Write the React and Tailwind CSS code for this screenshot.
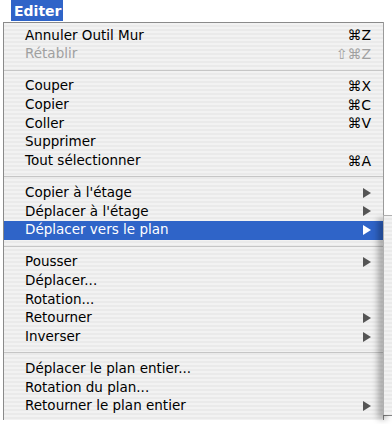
const groups = [
  [
    { label: "Annuler Outil Mur", key: "⌘Z" },
    { label: "Rétablir", key: "⇧⌘Z", disabled: true },
  ],
  [
    { label: "Couper", key: "⌘X" },
    { label: "Copier", key: "⌘C" },
    { label: "Coller", key: "⌘V" },
    { label: "Supprimer" },
    { label: "Tout sélectionner", key: "⌘A" },
  ],
  [
    { label: "Copier à l'étage", sub: true },
    { label: "Déplacer à l'étage", sub: true },
    { label: "Déplacer vers le plan", sub: true, active: true },
  ],
  [
    { label: "Pousser", sub: true },
    { label: "Déplacer..." },
    { label: "Rotation..." },
    { label: "Retourner", sub: true },
    { label: "Inverser", sub: true },
  ],
  [
    { label: "Déplacer le plan entier..." },
    { label: "Rotation du plan..." },
    { label: "Retourner le plan entier", sub: true },
  ],
];

function Arrow({ active }) {
  return (
    <svg width="8" height="10" viewBox="0 0 8 10" className="shrink-0">
      <path d="M0 0 L8 5 L0 10 Z" fill={active ? "#ffffff" : "#555555"} />
    </svg>
  );
}

function Item({ item }) {
  const color = item.active
    ? "text-white"
    : item.disabled
    ? "text-[#a0a0a0]"
    : "text-black";
  return (
    <div
      className={`flex h-[18.75px] items-center justify-between pl-[21px] pr-[12px] ${
        item.active ? "bg-[#2f64c8]" : ""
      } ${color}`}
    >
      <span>{item.label}</span>
      {item.key && (
        <span className={`text-[14px] ${item.disabled ? "text-[#a0a0a0]" : "text-black"}`}>
          {item.key}
        </span>
      )}
      {item.sub && <Arrow active={item.active} />}
    </div>
  );
}

export default function App() {
  return (
    <div className="w-[392px] h-[424px] overflow-hidden bg-white text-[13.5px] leading-none font-['DejaVu_Sans',sans-serif]">
      {/* Menu bar title */}
      <div className="h-[22px] pl-[11px]">
        <div className="inline-flex h-[21px] w-[52px] items-center bg-[#2f64c8] pl-[3px] text-[14px] font-semibold text-white">
          Editer
        </div>
      </div>

      <div className="flex">
        {/* Main menu */}
        <div className="ml-[3px] w-[380px] border-l border-t border-[#8a8a8a] bg-[repeating-linear-gradient(to_bottom,#f2f2f2_0px,#f2f2f2_2px,#eaeaea_2px,#eaeaea_4px)] pt-[3px] pb-[4px]">
          {groups.map((g, gi) => (
            <div key={gi}>
              {gi > 0 && (
                <div className="flex h-[13px] items-center">
                  <div className="h-px w-full bg-[#c6c6c6]" />
                </div>
              )}
              {g.map((item, i) => (
                <Item key={i} item={item} />
              ))}
            </div>
          ))}
        </div>

        {/* Edge of the open submenu */}
        <div className="flex flex-1 flex-col">
          <div className="h-[193px] border-l border-[#9a9a9a]" />
          <div className="relative z-10 h-[200px] border-l border-t border-[#b0b0b0] bg-[repeating-linear-gradient(to_bottom,#f2f2f2_0px,#f2f2f2_2px,#eaeaea_2px,#eaeaea_4px)] shadow-[-5px_4px_6px_rgba(0,0,0,0.3)]" />
          <div className="flex-1 border-l border-t border-[#888]" />
        </div>
      </div>
    </div>
  );
}
